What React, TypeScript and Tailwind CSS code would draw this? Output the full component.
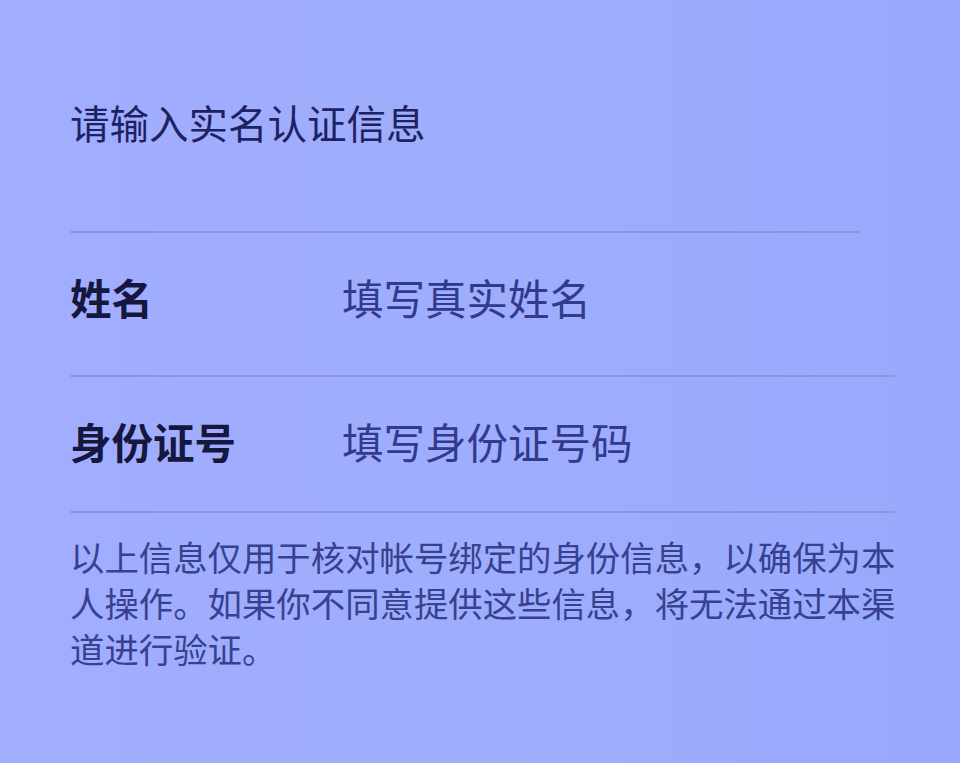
import React from 'react';

const fields = [
  { label: '姓名', placeholder: '填写真实姓名' },
  { label: '身份证号', placeholder: '填写身份证号码' },
];

const App: React.FC = () => {
  return (
    <div
      className="min-h-[763px] w-[960px] bg-gradient-to-r from-[#a1adfe] via-[#9fadfd] to-[#98a9fc] pl-[70px] pr-[65px] pt-[98px]"
      style={{ fontFamily: '"Noto Sans CJK SC", "Noto Sans", sans-serif' }}
    >
      <h1 className="text-[39.5px] leading-[48px] font-normal text-[#1d2262]">请输入实名认证信息</h1>

      <div className="mt-[85px] h-[2px] w-[790px] bg-[#8a95e3]" />

      {fields.map((f, i) => (
        <div key={f.label}>
          <div className={`flex items-center ${i === 0 ? 'h-[142px] pb-[14px]' : 'h-[134px] pb-[6px]'}`}>
            <span className="w-[272px] text-[41.5px] font-bold text-[#15173e]">{f.label}</span>
            <span className="text-[41.5px] text-[#313a8c]">{f.placeholder}</span>
          </div>
          <div className="h-[2px] w-[825px] bg-[#8a95e3]" />
        </div>
      ))}

      <p className="mt-[20px] w-[830px] text-[34.4px] leading-[46px] text-[#37418f]">
        以上信息仅用于核对帐号绑定的身份信息，以确保为本人操作。如果你不同意提供这些信息，将无法通过本渠道进行验证。
      </p>
    </div>
  );
};

export default App;
